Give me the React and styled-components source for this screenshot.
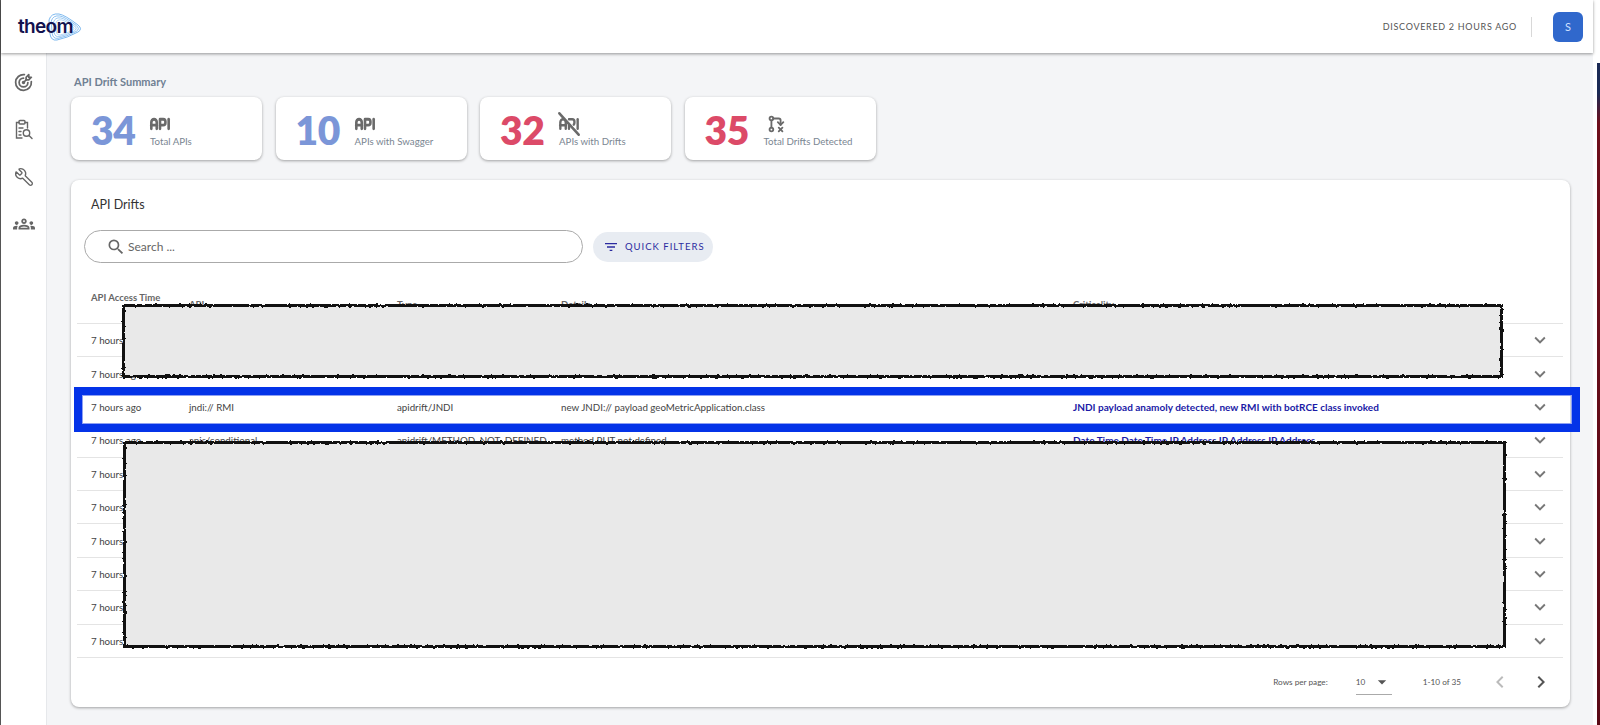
import React from 'react';
import styled, { createGlobalStyle } from 'styled-components';
import { TbApi, TbApiOff, TbGitBranchDeleted, TbTargetArrow } from 'react-icons/tb';
import { MdOutlineGroups, MdSearch, MdFilterList, MdExpandMore, MdChevronLeft, MdChevronRight, MdArrowDropDown } from 'react-icons/md';
import { Wrench } from 'lucide-react';

const FONT = `"Lato", "Noto Sans", "Liberation Sans", sans-serif`;

const GlobalStyle = createGlobalStyle`
  html, body { margin: 0; padding: 0; height: 100%; background: #fff; }
  * { box-sizing: border-box; }
  body { font-family: ${FONT}; overflow: hidden; }
`;

const Screen = styled.div`
  position: relative;
  display: flex;
  width: 1600px;
  height: 725px;
  overflow: hidden;
  background: #fff;
`;

const Shell = styled.div`
  flex: 0 0 1593px;
  display: flex;
  flex-direction: column;
  border-left: 1px solid #555;
  background: #f4f5f7;
`;

const WindowEdge = styled.div`
  width: 3px;
  margin: 63px 0 0 4px;
  background: linear-gradient(#1b2a55 0, #1b2a55 30px, #6e0f1c 60px, #5a0a16 100%);
`;

const Header = styled.header`
  position: relative;
  z-index: 2;
  flex: 0 0 53px;
  display: flex;
  align-items: center;
  justify-content: space-between;
  padding: 0 10px 0 17px;
  background: #fff;
  box-shadow: 0 1px 3px rgba(0, 0, 0, 0.4);
`;

const Logo = styled.div`
  position: relative;
  width: 66px;
  height: 30px;
  display: flex;
  align-items: center;
`;

const LogoText = styled.span`
  position: relative;
  font-family: "Inter", sans-serif;
  font-size: 19px;
  font-weight: 600;
  letter-spacing: -0.7px;
  color: #12124e;
`;

const LogoSwirl = styled.svg`
  position: absolute;
  left: 27px;
  top: 0;
  width: 38px;
  height: 30px;
`;

const HeaderRight = styled.div`
  display: flex;
  align-items: center;
`;

const Discovered = styled.span`
  font-size: 9px;
  letter-spacing: 0.7px;
  color: #555;
`;

const HeaderDivider = styled.span`
  width: 1px;
  height: 20px;
  margin: 0 21px 0 14px;
  background: #d8d8d8;
`;

const Avatar = styled.div`
  width: 30px;
  height: 30px;
  border-radius: 6px;
  display: flex;
  align-items: center;
  justify-content: center;
  font-size: 11px;
  color: #cfe0ff;
  background: #3068cc;
`;

const Body = styled.div`
  flex: 1;
  display: flex;
  min-height: 0;
`;

const Sidebar = styled.nav`
  flex: 0 0 46px;
  display: flex;
  flex-direction: column;
  padding-top: 6px;
  background: #fff;
  border-right: 1px solid #e6e8eb;
`;

const NavItem = styled.div`
  height: 47px;
  display: flex;
  align-items: center;
  justify-content: center;
  color: #666;
  svg { transform: ${({ $flip }) => ($flip ? 'scaleX(-1)' : 'none')}; }
`;

const Main = styled.main`
  flex: 1;
  display: flex;
  flex-direction: column;
  padding: 21px 23px 18px 24px;
`;

const SummaryTitle = styled.div`
  height: 23px;
  font-size: 11px;
  font-weight: 700;
  line-height: 16px;
  padding-left: 3px;
  color: #6f8093;
`;

const Cards = styled.div`
  display: flex;
  gap: 13.5px;
  margin-bottom: 20px;
`;

const Card = styled.div`
  width: 191px;
  height: 63px;
  display: flex;
  align-items: center;
  padding-left: 20px;
  background: #fff;
  border-radius: 8px;
  box-shadow: 0 1px 3px rgba(0, 0, 0, 0.35);
`;

const CardNumber = styled.div`
  width: 59px;
  margin-top: 3px;
  font-size: 39px;
  font-weight: 800;
  line-height: 1;
  letter-spacing: -0.3px;
  color: ${({ $alert }) => ($alert ? '#dc4a68' : '#7b96d8')};
`;

const CardInfo = styled.div`
  display: flex;
  flex-direction: column;
  color: #6a6a6a;
`;

const CardIcon = styled.div`
  height: 24px;
  display: flex;
  align-items: center;
  margin-left: ${({ $branch }) => ($branch ? '1px' : '-3px')};
  svg { transform: ${({ $branch }) => ($branch ? 'translateY(2px) scaleY(-1)' : 'translateY(2px) scale(1, 1.1)')}; }
`;

const CardLabel = styled.div`
  font-size: 9.7px;
  line-height: 14px;
  color: #7a8692;
`;

const Panel = styled.section`
  flex: 1;
  display: flex;
  flex-direction: column;
  padding: 15px 7px 0 6px;
  background: #fff;
  border-radius: 8px;
  box-shadow: 0 1px 3px rgba(0, 0, 0, 0.35);
`;

const PanelTitle = styled.h2`
  margin: 0 0 15px 14px;
  font-size: 12.5px;
  font-weight: 400;
  line-height: 20px;
  color: #333;
`;

const Toolbar = styled.div`
  display: flex;
  align-items: center;
  gap: 10px;
  padding-left: 7px;
`;

const SearchBox = styled.div`
  width: 499px;
  height: 33px;
  display: flex;
  align-items: center;
  gap: 2px;
  padding-left: 21px;
  border: 1px solid #aaa;
  border-radius: 17px;
  font-size: 12px;
  color: #666;
`;

const FilterButton = styled.button`
  width: 120px;
  height: 30px;
  display: flex;
  align-items: center;
  gap: 6px;
  padding: 0 0 0 10px;
  border: 0;
  border-radius: 15px;
  font-family: ${FONT};
  font-size: 9.5px;
  letter-spacing: 1px;
  color: #2b2ba0;
  background: #e8ecf2;
`;

const Row = styled.div`
  display: grid;
  grid-template-columns: 98px 208px 164px 512px 1fr 46px;
  align-items: center;
  padding-left: 14px;
  font-size: 9.75px;
  color: #444;
  height: ${({ $head }) => ($head ? '61px' : '33.4px')};
  border-bottom: 1px solid #e4e4e4;
`;

const HeadCell = styled.div`
  align-self: end;
  padding-bottom: ${({ $raised }) => ($raised ? '20px' : '13px')};
  font-size: 9.5px;
  font-weight: 700;
  color: #666;
`;

const Criticality = styled.div`
  font-size: 10px;
  font-weight: 700;
  color: #1a1aa6;
`;

const Chevron = styled.div`
  display: flex;
  justify-content: center;
  color: #777;
`;

const Pagination = styled.div`
  flex: 1;
  display: flex;
  align-items: center;
  justify-content: flex-end;
  font-size: 8.2px;
  color: #555;
`;

const PageSelect = styled.div`
  width: 36px;
  height: 26px;
  display: flex;
  align-items: center;
  justify-content: space-between;
  margin: 0 31px 0 28px;
  border-bottom: 1px solid #aaa;
`;

const PageRange = styled.span`
  margin-right: 27px;
`;

const PageArrow = styled.div`
  display: flex;
  margin-right: ${({ $last }) => ($last ? '10px' : '17px')};
  color: ${({ $off }) => ($off ? '#bbb' : '#555')};
`;

/* blue highlight drawn on top of the third row */
const Highlight = styled.div`
  position: absolute;
  left: 74px;
  top: 387px;
  width: 1506px;
  height: 45px;
  border: 8px solid #0433e8;
  box-shadow: inset 0 0 0 1px #8fa0f2;
`;

/* redaction scribbles */
const Redaction = styled.div`
  position: absolute;
  left: ${({ $x }) => $x}px;
  top: ${({ $y }) => $y}px;
  width: ${({ $w }) => $w}px;
  height: ${({ $h }) => $h}px;
  background: #e9e9e9;
  border: 3px solid #111;
  filter: url(#scribble);
`;

const FilterDefs = styled.svg`
  position: absolute;
  width: 0;
  height: 0;
`;

const ReportIcon = () => (
  <svg width="21" height="21" viewBox="0 0 21 21" fill="none" stroke="currentColor" strokeWidth="1.4" strokeLinecap="round">
    <path d="M6 3.5H3.5V19H9" />
    <path d="M12 3.5H14.5V9" />
    <rect x="6" y="1.5" width="6" height="3.5" rx="1" />
    <path d="M6 9H10M6 12.5H8M6 16H8" />
    <circle cx="13.5" cy="14" r="3.2" />
    <path d="M16 16.5L19 19.5" />
  </svg>
);

const SWIRL = 'M4 8 Q6 1 14 2 Q20 3 33 13 Q38 17 33 20 Q22 26 12 28 Q6 29 5 22 Z';

const cards = [
  { value: 34, icon: <TbApi size={26} strokeWidth={2.4} />, label: 'Total APIs' },
  { value: 10, icon: <TbApi size={26} strokeWidth={2.4} />, label: 'APIs with Swagger' },
  { value: 32, icon: <TbApiOff size={26} strokeWidth={2.2} />, label: 'APIs with Drifts', alert: true },
  { value: 35, icon: <TbGitBranchDeleted size={22} />, label: 'Total Drifts Detected', alert: true, branch: true },
];

const rows = [
  {},
  {},
  { api: 'jndi:// RMI', type: 'apidrift/JNDI', details: 'new JNDI:// payload geoMetricApplication.class', critical: 'JNDI payload anamoly detected, new RMI with botRCE class invoked' },
  { api: 'apis/conditional', type: 'apidrift/METHOD_NOT_DEFINED', details: 'method PUT not defined', critical: 'Date Time Date Time IP Address IP Address IP Address' },
  {},
  {},
  {},
  {},
  {},
  {},
];

const App = () => (
  <Screen>
    <GlobalStyle />
    <FilterDefs>
      <filter id="scribble" x="-2%" y="-10%" width="104%" height="120%" colorInterpolationFilters="sRGB">
        <feTurbulence type="fractalNoise" baseFrequency="0.3" numOctaves="2" seed="4" />
        <feDisplacementMap in="SourceGraphic" scale="3" />
      </filter>
    </FilterDefs>
    <Shell>
      <Header>
        <Logo>
          <LogoSwirl viewBox="0 0 38 30" fill="none" stroke="#5aa6ea" strokeWidth="0.8">
            {[1, 0.86, 0.72, 0.58].map((scale) => (
              <path key={scale} d={SWIRL} transform={`translate(20 16) scale(${scale}) translate(-20 -16)`} />
            ))}
          </LogoSwirl>
          <LogoText>theom</LogoText>
        </Logo>
        <HeaderRight>
          <Discovered>DISCOVERED 2 HOURS AGO</Discovered>
          <HeaderDivider />
          <Avatar>S</Avatar>
        </HeaderRight>
      </Header>
      <Body>
        <Sidebar>
          <NavItem><TbTargetArrow size={21} /></NavItem>
          <NavItem><ReportIcon /></NavItem>
          <NavItem $flip><Wrench size={20} strokeWidth={1.6} /></NavItem>
          <NavItem><MdOutlineGroups size={22} /></NavItem>
        </Sidebar>
        <Main>
          <SummaryTitle>API Drift Summary</SummaryTitle>
          <Cards>
            {cards.map((card) => (
              <Card key={card.label}>
                <CardNumber $alert={card.alert}>{card.value}</CardNumber>
                <CardInfo>
                  <CardIcon $branch={card.branch}>{card.icon}</CardIcon>
                  <CardLabel>{card.label}</CardLabel>
                </CardInfo>
              </Card>
            ))}
          </Cards>
          <Panel>
            <PanelTitle>API Drifts</PanelTitle>
            <Toolbar>
              <SearchBox><MdSearch size={20} />Search ...</SearchBox>
              <FilterButton><MdFilterList size={16} />QUICK FILTERS</FilterButton>
            </Toolbar>
            <Row $head>
              <HeadCell $raised>API Access Time</HeadCell>
              <HeadCell>API</HeadCell>
              <HeadCell>Type</HeadCell>
              <HeadCell>Details</HeadCell>
              <HeadCell>Criticality</HeadCell>
              <span />
            </Row>
            {rows.map((row, index) => (
              <Row key={index}>
                <div>7 hours ago</div>
                <div>{row.api}</div>
                <div>{row.type}</div>
                <div>{row.details}</div>
                <Criticality>{row.critical}</Criticality>
                <Chevron><MdExpandMore size={22} /></Chevron>
              </Row>
            ))}
            <Pagination>
              <span>Rows per page:</span>
              <PageSelect>10<MdArrowDropDown size={20} /></PageSelect>
              <PageRange>1-10 of 35</PageRange>
              <PageArrow $off><MdChevronLeft size={24} /></PageArrow>
              <PageArrow $last><MdChevronRight size={24} /></PageArrow>
            </Pagination>
          </Panel>
        </Main>
      </Body>
    </Shell>
    <WindowEdge />
    <Highlight />
    <Redaction $x={122} $y={304} $w={1381} $h={74} />
    <Redaction $x={123} $y={441} $w={1383} $h={207} />
  </Screen>
);

export default App;
